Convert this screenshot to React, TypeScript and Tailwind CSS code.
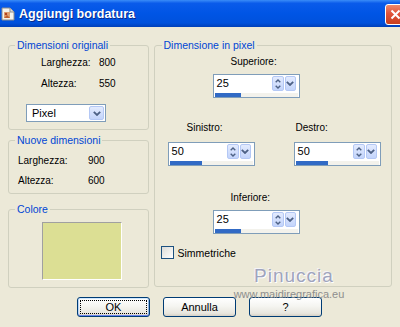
import React from "react";

const beige = "bg-[#ECE9D8]";

function Chevron({ up = false, small = false }: { up?: boolean; small?: boolean }) {
  const w = small ? 6 : 8;
  const h = small ? 4 : 5;
  return (
    <svg width={w} height={h} viewBox={`0 0 ${w} ${h}`} className={up ? "rotate-180" : ""}>
      <path
        d={small ? "M0.7 0.7 L3 3 L5.3 0.7" : "M0.8 0.8 L4 4 L7.2 0.8"}
        fill="none"
        stroke="#4D6185"
        strokeWidth={small ? 1.4 : 1.8}
      />
    </svg>
  );
}

function Legend({ children }: { children: React.ReactNode }) {
  return (
    <span className={`-mt-[7px] ml-[6px] block w-fit px-[2px] text-[10.5px] leading-[12px] text-[#0046D5] ${beige}`}>
      {children}
    </span>
  );
}

function Spin({ value, bar }: { value: string; bar: string }) {
  return (
    <div className="flex h-[24px] w-[87px] flex-col border border-[#7F9DB9] bg-white px-px pt-px">
      <div className="flex h-[15px] items-center">
        <span className="flex-1 pl-[2px] text-[11px] leading-none text-black">{value}</span>
        <div className="flex h-[15px] w-[12px] flex-col items-center justify-center gap-[2px] rounded-[2px] border border-[#B4C8F5] bg-[linear-gradient(to_bottom,#E3EBFE,#C3D4FB)]">
          <Chevron up small />
          <Chevron small />
        </div>
        <div className="ml-px mr-[2px] flex h-[15px] w-[11px] items-center justify-center rounded-[2px] border border-[#B4C8F5] bg-[linear-gradient(to_bottom,#E3EBFE,#C3D4FB)]">
          <Chevron />
        </div>
      </div>
      <div className="mt-[2px] h-[4px] bg-[#F3F2EC]">
        <div className={`h-full bg-[#316AC5] ${bar}`} />
      </div>
    </div>
  );
}

function XPButton({ children, def = false }: { children: React.ReactNode; def?: boolean }) {
  return (
    <div
      className={`flex h-[20px] w-[73px] rounded-[3px] border border-[#003C74] bg-[linear-gradient(to_bottom,#FFFFFF_0%,#F5F5F1_45%,#E8E6DE_85%,#D6D0C5_100%)] p-[2px] text-[11px] leading-none text-black ${
        def
          ? "shadow-[inset_0_1px_0_#CEE7FF,inset_0_-1px_0_#6982EE,inset_1px_0_0_#B8D4F8,inset_-1px_0_0_#8DB2E3]"
          : ""
      }`}
    >
      <div
        className={`flex flex-1 items-center justify-center ${
          def ? "border border-dotted border-black" : ""
        }`}
      >
        {children}
      </div>
    </div>
  );
}

function WindowIcon() {
  return (
    <svg width="14" height="14" viewBox="0 0 14 14">
      <path d="M1 1 H9 L13 5 V13 H1 Z" fill="#F4F2EC" stroke="#8C8C8C" strokeWidth="1" />
      <path d="M9 1 V5 H13" fill="#DCDCDC" stroke="#8C8C8C" strokeWidth="1" />
      <rect x="3" y="5" width="6" height="6" fill="#E0A070" />
      <circle cx="5" cy="7" r="1.2" fill="#B04020" />
      <path d="M3 11 L6 8 L9 11 Z" fill="#C06030" />
    </svg>
  );
}

export default function App() {
  return (
    <div className={`relative h-[327px] w-[400px] overflow-hidden font-['Liberation_Sans',Arial,sans-serif] ${beige}`}>
      {/* Title bar */}
      <div className="flex h-[27px] items-center justify-between bg-[linear-gradient(to_bottom,#3A8CF8_0%,#0A5BEA_12%,#0055E5_50%,#0051DC_85%,#0040B8_100%)] pl-[1px] pt-[1px]">
        <div className="flex items-center gap-[4px]">
          <WindowIcon />
          <span className="text-[12.5px] font-bold text-white [text-shadow:1px_1px_0_#0A2A8A]">
            Aggiungi bordatura
          </span>
        </div>
        <div className="-mr-[6px] flex h-[21px] w-[21px] items-center justify-center rounded-[3px] border border-white bg-[linear-gradient(to_bottom,#EE8A6E,#E0533A_45%,#C8401F)]">
          <svg width="11" height="11" viewBox="0 0 11 11">
            <path d="M1.5 1.5 L9.5 9.5 M9.5 1.5 L1.5 9.5" stroke="white" strokeWidth="2" />
          </svg>
        </div>
      </div>

      {/* Body */}
      <div className="px-[8px] text-[10px] leading-[12px] text-black">
        <div className="mt-[18px] flex gap-[5px]">
          {/* Left column */}
          <div className="flex w-[142px] flex-col">
            <div className="h-[85px] rounded-[3px] border border-[#D0D0BF]">
              <Legend>Dimensioni originali</Legend>
              <div className="mt-[6px] grid grid-cols-[58px_auto] gap-y-[9px] pl-[32px]">
                <span>Larghezza:</span>
                <span>800</span>
                <span>Altezza:</span>
                <span>550</span>
              </div>
              <div className="ml-[17px] mt-[14px] flex h-[18px] w-[80px] items-center border border-[#7F9DB9] bg-white p-px">
                <span className="flex-1 pl-[4px] text-[11px] leading-none">Pixel</span>
                <div className="flex h-full w-[15px] items-center justify-center rounded-[2px] border border-[#B4C8F5] bg-[linear-gradient(to_bottom,#E3EBFE,#C3D4FB)]">
                  <Chevron />
                </div>
              </div>
            </div>

            <div className="mt-[10px] h-[54px] rounded-[3px] border border-[#D0D0BF]">
              <Legend>Nuove dimensioni</Legend>
              <div className="mt-[9px] grid grid-cols-[70px_auto] gap-y-[8px] pl-[9px]">
                <span>Larghezza:</span>
                <span>900</span>
                <span>Altezza:</span>
                <span>600</span>
              </div>
            </div>

            <div className="mt-[15px] h-[79px] rounded-[3px] border border-[#D0D0BF]">
              <Legend>Colore</Legend>
              <div className="ml-[33px] mt-[7px] h-[58px] w-[80px] border border-b-white border-l-[#A0A0A0] border-r-white border-t-[#A0A0A0] bg-[#DCDF94]" />
            </div>
          </div>

          {/* Right group */}
          <div className="h-[242px] w-[241px] rounded-[3px] border border-[#D0D0BF]">
            <span className={`-mt-[7px] ml-[7px] block w-fit px-[2px] text-[10.5px] leading-[12px] text-[#0046D5] ${beige}`}>
              Dimensione in pixel
            </span>

            <div className="ml-[58px] mt-[5px] flex flex-col">
              <span className="ml-[18px]">Superiore:</span>
              <div className="mt-[6px]">
                <Spin value="25" bar="w-[26px]" />
              </div>
            </div>

            <div className="ml-[13px] mt-[24px] flex gap-[39px]">
              <div className="flex flex-col">
                <span className="ml-[19px]">Sinistro:</span>
                <div className="mt-[8px]">
                  <Spin value="50" bar="w-[32px]" />
                </div>
              </div>
              <div className="flex flex-col">
                <span className="ml-[2px]">Destro:</span>
                <div className="mt-[8px]">
                  <Spin value="50" bar="w-[32px]" />
                </div>
              </div>
            </div>

            <div className="ml-[58px] mt-[26px] flex flex-col">
              <span className="ml-[18px]">Inferiore:</span>
              <div className="mt-[6px]">
                <Spin value="25" bar="w-[26px]" />
              </div>
            </div>

            <div className="ml-[6px] mt-[12px] flex items-center gap-[4px]">
              <div className="h-[13px] w-[13px] border border-[#1C5180] bg-[linear-gradient(135deg,#DCDCD7,#FFFFFF)]" />
              <span className="text-[10.5px]">Simmetriche</span>
            </div>
          </div>
        </div>

        {/* Buttons */}
        <div className="ml-[69px] mt-[9px] flex gap-[13px]">
          <XPButton def>OK</XPButton>
          <XPButton>Annulla</XPButton>
          <XPButton>?</XPButton>
        </div>
      </div>

      {/* Watermark */}
      <div className="pointer-events-none absolute left-[228px] top-[265px] flex w-[122px] flex-col items-center">
        <span className="ml-[10px] text-[19px] leading-[22px] tracking-[1px] text-[#9FA4BD] [text-shadow:1px_1px_0_#FFFFFF,-1px_-1px_0_#F4F4F8]">
          Pinuccia
        </span>
        <span className="mt-[1px] text-[11px] leading-[12px] text-[#8E8E8E]">www.maidiregrafica.eu</span>
      </div>
    </div>
  );
}
